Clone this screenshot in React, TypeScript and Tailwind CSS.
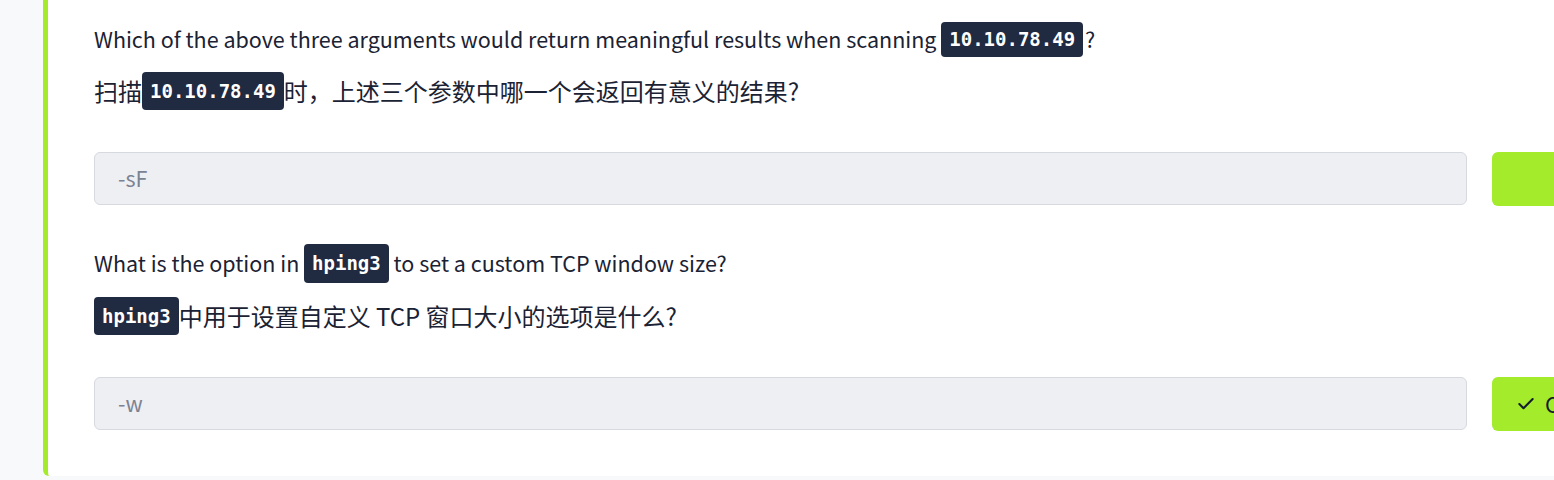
import { Check } from 'lucide-react';

const font = { fontFamily: '"Noto Sans CJK SC", "Noto Sans", sans-serif' };

function Code({ children, className = '' }: { children: string; className?: string }) {
  return (
    <code
      className={`inline-block rounded-[4px] bg-[#202a41] px-[8px] font-['DejaVu_Sans_Mono',monospace] text-[19px] font-bold leading-[35px] text-white ${className}`}
    >
      {children}
    </code>
  );
}

function Answer({ value, done }: { value: string; done?: boolean }) {
  return (
    <div className="mt-[42px] flex gap-[25px]">
      <div className="flex h-[53px] flex-1 items-center rounded-[6px] border border-[#d6d9df] bg-[#eeeff3] px-[23px] text-[21.5px] text-[#7b8393]">
        {value}
      </div>
      <button className="flex h-[54px] w-[160px] shrink-0 items-center gap-[9px] rounded-[6px] bg-[#a4eb2c] pl-[24px] pr-[20px] text-[21.5px] text-[#151c2c]">
        {done && (
          <>
            <Check size={20} strokeWidth={2.5} className="shrink-0" />
            <span>Correct</span>
          </>
        )}
      </button>
    </div>
  );
}

export default function App() {
  return (
    <div className="h-[480px] overflow-hidden bg-[#f8f9fb]" style={font}>
      <div className="ml-[43px] w-[1609px] rounded-bl-[6px] border-l-[5px] border-[#a4eb2c] bg-white pb-[45px] pl-[46px] pt-[21px]">
        <p className="flex h-[36px] items-center whitespace-pre text-[21.5px] text-[#1a2233]">
          <span>Which of the above three arguments would return meaningful results when scanning </span>
          <Code>10.10.78.49</Code>
          <span className="ml-[2px]">?</span>
        </p>
        <p className="mt-[15px] flex h-[38px] items-center text-[24px] text-[#1a2233]">
          <span>扫描</span>
          <Code className="leading-[38px]">10.10.78.49</Code>
          <span>时，上述三个参数中哪一个会返回有意义的结果?</span>
        </p>
        <Answer value="-sF" />
        <p className="mt-[37px] flex h-[40px] items-center whitespace-pre text-[21.5px] text-[#1a2233]">
          <span>What is the option in </span>
          <Code className="leading-[39px]">hping3</Code>
          <span> to set a custom TCP window size?</span>
        </p>
        <p className="mt-[14px] flex h-[38px] items-center text-[24px] text-[#1a2233]">
          <Code className="leading-[38px]">hping3</Code>
          <span>中用于设置自定义 TCP 窗口大小的选项是什么?</span>
        </p>
        <Answer value="-w" done />
      </div>
    </div>
  );
}
